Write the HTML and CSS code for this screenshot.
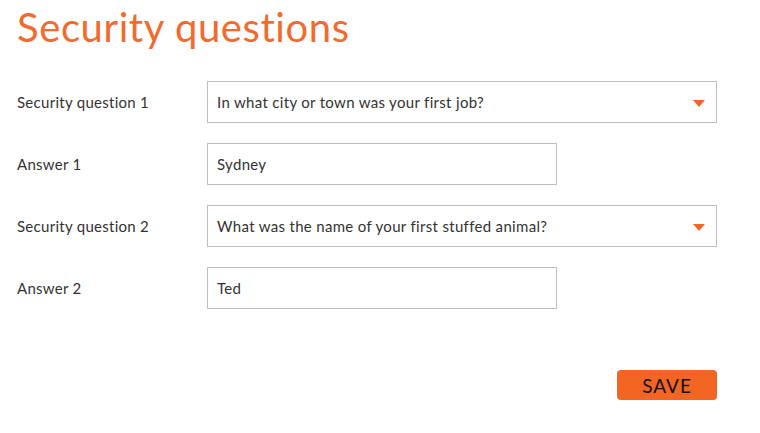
FILE: index.html
```html
<!DOCTYPE html>
<html>
<head>
<meta charset="utf-8">
<link rel="stylesheet" href="styles.css">
</head>
<body>
<div class="page">
  <h1 class="title">Security questions</h1>
  <form class="form">
    <div class="row">
      <label class="label">Security question 1</label>
      <div class="field select">
        <span class="value">In what city or town was your first job?</span>
        <svg class="arrow" width="12" height="7" viewBox="0 0 12 7"><polygon points="0,0 12,0 6,7" fill="#f26522"/></svg>
      </div>
    </div>
    <div class="row">
      <label class="label">Answer 1</label>
      <div class="field input"><span class="value">Sydney</span></div>
    </div>
    <div class="row">
      <label class="label">Security question 2</label>
      <div class="field select">
        <span class="value">What was the name of your first stuffed animal?</span>
        <svg class="arrow" width="12" height="7" viewBox="0 0 12 7"><polygon points="0,0 12,0 6,7" fill="#f26522"/></svg>
      </div>
    </div>
    <div class="row">
      <label class="label">Answer 2</label>
      <div class="field input"><span class="value">Ted</span></div>
    </div>
    <div class="actions">
      <button type="button" class="save">SAVE</button>
    </div>
  </form>
</div>
</body>
</html>
```
FILE: styles.css
```css
* { box-sizing: border-box; }
html, body { margin: 0; padding: 0; background: #fff; }
body { font-family: Lato, "Open Sans", sans-serif; color: #333; }
.page { padding: 0 0 0 17px; width: 717px; }
.title {
  margin: 0;
  padding-top: 4px;
  height: 81px;
  font-weight: 400;
  font-size: 40px;
  line-height: 46px;
  color: #f26a2e;
  letter-spacing: 0.6px;
}
.form { display: flex; flex-direction: column; gap: 20px; }
.row { display: flex; align-items: center; height: 42px; }
.label { width: 190px; font-size: 15px; color: #333; letter-spacing: 0.28px; }
.field {
  height: 42px;
  border: 1px solid #bdbdbd;
  display: flex;
  align-items: center;
  padding: 0 10px 0 9px;
  font-size: 15px;
  color: #333;
  letter-spacing: 0.32px;
}
.select { width: 510px; justify-content: space-between; }
.input { width: 350px; }
.arrow { margin-right: 1px; margin-top: 2px; }
.actions { display: flex; justify-content: flex-end; padding-top: 41px; }
.save {
  width: 100px;
  height: 30px;
  border: none;
  border-radius: 4px;
  background: #f26522;
  color: #111;
  font-family: Lato, sans-serif;
  font-size: 19px;
  padding: 0;
  letter-spacing: 1px;
}
```
